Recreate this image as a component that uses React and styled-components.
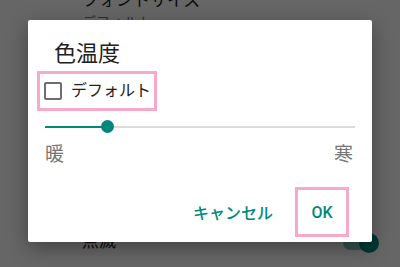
import React from "react";
import styled, { createGlobalStyle } from "styled-components";

const Global = createGlobalStyle`
  html, body { margin: 0; padding: 0; }
  body {
    width: 400px; height: 267px; overflow: hidden; background: #fff;
    font-family: Roboto, "Noto Sans CJK JP", sans-serif;
  }
`;

const Screen = styled.div`
  position: relative;
  width: 400px;
  height: 267px;
  overflow: hidden;
  background: #fff;
`;

const BgList = styled.div`
  display: flex;
  flex-direction: column;
  justify-content: space-between;
  height: 267px;
`;

const BgItem = styled.div`
  display: flex;
  align-items: center;
  justify-content: space-between;
  padding: 0 23px 0 82px;
  margin: ${(p) => p.$margin || "0"};
`;

const BgText = styled.div`
  display: flex;
  flex-direction: column;
`;

const BgTitle = styled.div`
  font-size: 17px;
  line-height: 24px;
  color: #212121;
`;

const BgSummary = styled.div`
  font-size: 14px;
  line-height: 20px;
  color: #757575;
`;

const Switch = styled.div`
  position: relative;
  width: 34px;
  height: 14px;
  border-radius: 7px;
  background: #80cbc4;
  margin-top: 4px;
`;

const Thumb = styled.div`
  position: absolute;
  right: -2px;
  top: -3px;
  width: 20px;
  height: 20px;
  border-radius: 50%;
  background: #00897b;
`;

const Scrim = styled.div`
  position: absolute;
  inset: 0;
  background: rgba(0, 0, 0, 0.6);
  display: flex;
  justify-content: center;
  align-items: flex-start;
  padding-top: 20px;
`;

const Dialog = styled.div`
  width: 344px;
  height: 222px;
  background: #fff;
  border-radius: 2px;
  box-shadow: 0 6px 20px rgba(0, 0, 0, 0.35);
  display: flex;
  flex-direction: column;
  box-sizing: border-box;
`;

const Title = styled.div`
  margin: 20px 0 0 26px;
  font-size: 22px;
  line-height: 28px;
  color: #212121;
`;

const CheckRow = styled.label`
  margin: 3px 0 0 9px;
  width: 120px;
  height: 40px;
  box-sizing: border-box;
  border: 3px solid #f8a8c8;
  display: flex;
  align-items: center;
  padding-left: 4px;
  gap: 9px;
`;

const Box = styled.span`
  width: 18px;
  height: 18px;
  box-sizing: border-box;
  border: 2px solid #6e6e6e;
  border-radius: 2px;
`;

const CheckLabel = styled.span`
  font-size: 16px;
  line-height: 22px;
  color: #212121;
`;

const Slider = styled.div`
  position: relative;
  margin: 4px 0 0 17px;
  width: 310px;
  height: 24px;
`;

const Track = styled.div`
  position: absolute;
  left: 0;
  right: 0;
  top: 11px;
  height: 2px;
  background: #dcdcdc;
`;

const Active = styled.div`
  position: absolute;
  left: 0;
  top: 11px;
  height: 2px;
  background: #00897b;
`;

const Knob = styled.div`
  position: absolute;
  top: 5px;
  width: 13px;
  height: 13px;
  margin-left: -6px;
  border-radius: 50%;
  background: #00897b;
`;

const Labels = styled.div`
  display: flex;
  justify-content: space-between;
  margin: 4px 19px 0 17px;
  font-size: 19px;
  line-height: 24px;
  color: #757575;
`;

const Actions = styled.div`
  display: flex;
  justify-content: flex-end;
  align-items: center;
  margin-top: 20px;
  padding-right: 23px;
`;

const Button = styled.button`
  height: 50px;
  box-sizing: border-box;
  border: ${(p) => (p.$marked ? "3px solid #f8a8c8" : "3px solid transparent")};
  width: ${(p) => (p.$marked ? "54px" : "auto")};
  padding: 0 ${(p) => (p.$marked ? "0" : "5px")};
  margin-left: ${(p) => (p.$marked ? "14px" : "0")};
  background: transparent;
  color: #00897b;
  font-family: Roboto, "Noto Sans CJK JP", sans-serif;
  font-size: 16px;
  font-weight: 500;
  display: flex;
  align-items: center;
  justify-content: center;
`;

export default function App() {
  const value = 0.2;
  return (
    <Screen>
      <Global />
      <BgList>
        <BgItem $margin="-12px 0 0 0">
          <BgText>
            <BgTitle>フォントサイズ</BgTitle>
            <BgSummary>デフォルト</BgSummary>
          </BgText>
        </BgItem>
        <BgItem $margin="0 0 14px 0">
          <BgTitle>点滅</BgTitle>
          <Switch>
            <Thumb />
          </Switch>
        </BgItem>
      </BgList>
      <Scrim>
        <Dialog>
          <Title>色温度</Title>
          <CheckRow>
            <Box />
            <CheckLabel>デフォルト</CheckLabel>
          </CheckRow>
          <Slider>
            <Track />
            <Active style={{ width: `${value * 100}%` }} />
            <Knob style={{ left: `${value * 100}%` }} />
          </Slider>
          <Labels>
            <span>暖</span>
            <span>寒</span>
          </Labels>
          <Actions>
            <Button>キャンセル</Button>
            <Button $marked>OK</Button>
          </Actions>
        </Dialog>
      </Scrim>
    </Screen>
  );
}
